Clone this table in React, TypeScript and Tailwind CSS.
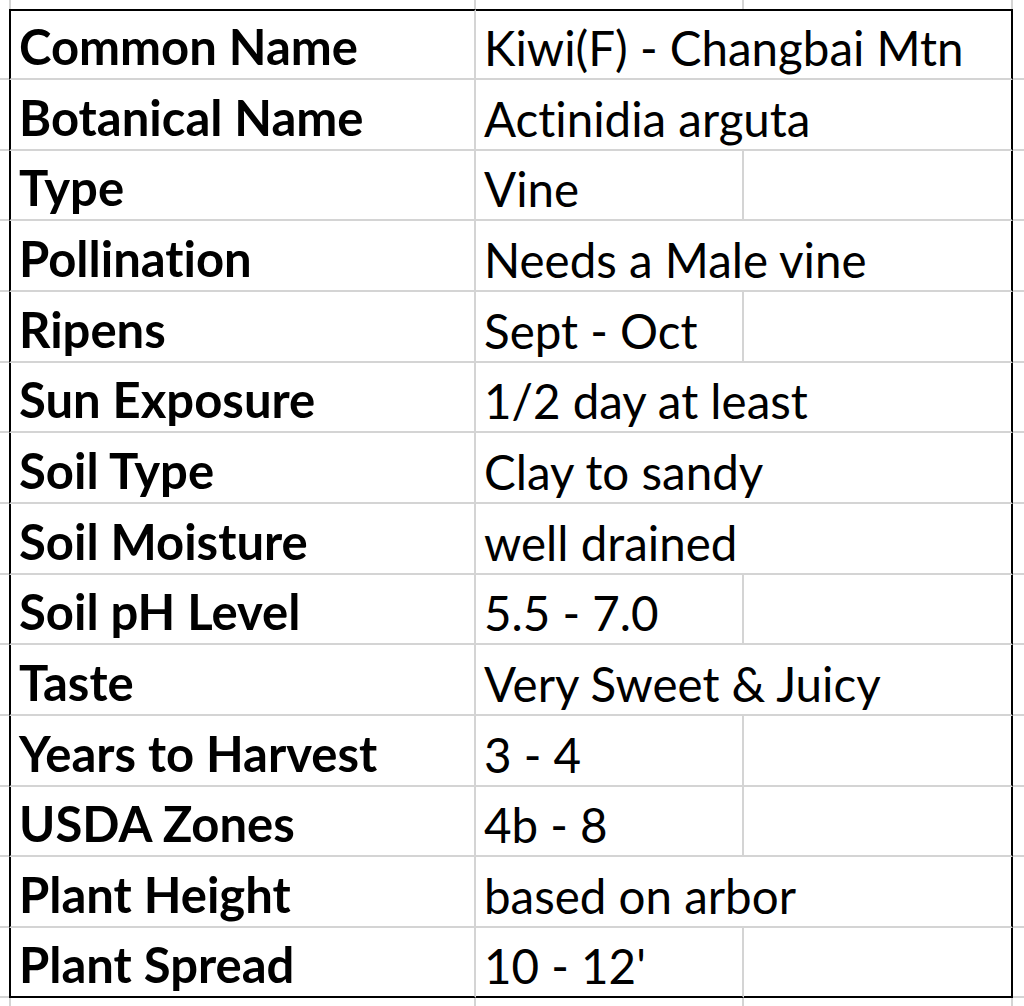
import React from "react";

interface Row {
  label: string;
  value: string;
  wide: boolean;
}

const rows: Row[] = [
  { label: "Common Name", value: "Kiwi(F) - Changbai Mtn", wide: true },
  { label: "Botanical Name", value: "Actinidia arguta", wide: true },
  { label: "Type", value: "Vine", wide: false },
  { label: "Pollination", value: "Needs a Male vine", wide: true },
  { label: "Ripens", value: "Sept - Oct", wide: false },
  { label: "Sun Exposure", value: "1/2 day at least", wide: true },
  { label: "Soil Type", value: "Clay to sandy", wide: true },
  { label: "Soil Moisture", value: "well drained", wide: true },
  { label: "Soil pH Level", value: "5.5 - 7.0", wide: false },
  { label: "Taste", value: "Very Sweet & Juicy", wide: true },
  { label: "Years to Harvest", value: "3 - 4", wide: false },
  { label: "USDA Zones", value: "4b - 8", wide: false },
  { label: "Plant Height", value: "based on arbor", wide: true },
  { label: "Plant Spread", value: "10 - 12'", wide: false },
];

// row heights so the grid lines land where the sheet has them
const heights = ["h-[71px]", "h-[71px]", "h-[70px]", "h-[71px]", "h-[71px]", "h-[70px]", "h-[71px]", "h-[71px]", "h-[70px]", "h-[71px]", "h-[71px]", "h-[70px]", "h-[71px]", "h-[70px]"];

function Strip({ height }: { height: string }) {
  return (
    <div className={`flex ${height}`}>
      <div className="w-[9px]" />
      <div className="w-[467px] border-l-2 border-r-2 border-[#d4d4d4]" />
      <div className="w-[268px] border-r-2 border-[#d4d4d4]" />
      <div className="w-[269px] border-r-2 border-[#d4d4d4]" />
      <div className="flex-1" />
    </div>
  );
}

export default function App() {
  return (
    <div className="w-[1024px] h-[1006px] bg-white overflow-hidden flex flex-col text-black font-['Lato',sans-serif] [font-variant-ligatures:none]">
      <Strip height="h-[9px]" />
      {rows.map((row, i) => {
        const first = i === 0;
        const last = i === rows.length - 1;
        const top = first ? "border-t-2 border-t-black" : "";
        const bottom = last ? "border-b-2 border-b-black" : "border-b-2 border-b-[#d4d4d4]";
        return (
          <div key={row.label} className={`flex ${heights[i]}`}>
            <div className="w-[9px] border-b-2 border-b-[#d4d4d4]" />
            <div className={`w-[467px] flex items-end pl-[8px] pb-[7px] border-l-2 border-l-black border-r-2 border-r-[#d4d4d4] ${top} ${bottom}`}>
              <span className="text-[49px] font-bold leading-none whitespace-nowrap">{row.label}</span>
            </div>
            {row.wide ? (
              <div className={`w-[537px] flex items-end pl-[8px] pb-[7px] border-r-2 border-r-black ${top} ${bottom}`}>
                <span className="text-[47.5px] leading-none whitespace-nowrap">{row.value}</span>
              </div>
            ) : (
              <>
                <div className={`w-[268px] flex items-end pl-[8px] pb-[7px] border-r-2 border-r-[#d4d4d4] ${top} ${bottom}`}>
                  <span className="text-[47.5px] leading-none whitespace-nowrap">{row.value}</span>
                </div>
                <div className={`w-[269px] border-r-2 border-r-black ${top} ${bottom}`} />
              </>
            )}
            <div className="flex-1 border-b-2 border-b-[#d4d4d4]" />
          </div>
        );
      })}
      <Strip height="flex-1" />
    </div>
  );
}
